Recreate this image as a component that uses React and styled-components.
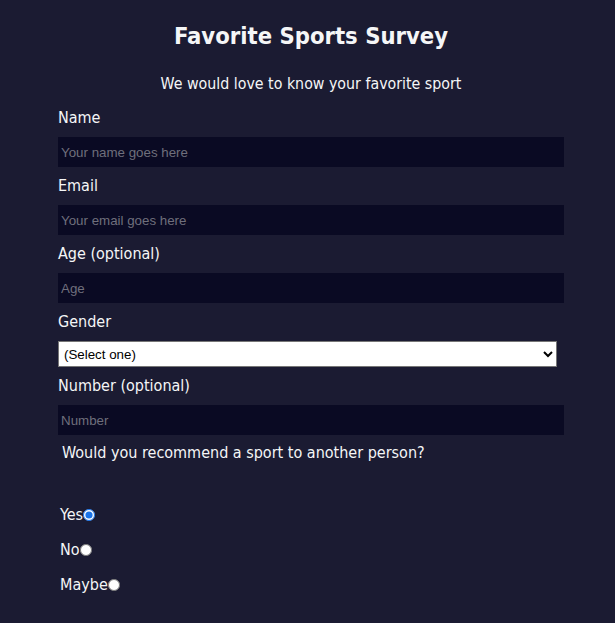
import React from 'react';
import styled, { createGlobalStyle } from 'styled-components';

const Global = createGlobalStyle`
  html, body {
    margin: 0;
    padding: 0;
    background-color: #1b1b32;
    color: #f5f6f7;
    font-family: "DejaVu Sans Condensed", "DejaVu Sans", sans-serif;
    font-size: 16px;
  }
`;

const Page = styled.div`
  width: 506px;
  margin: 0 auto;
  padding: 0 0 20px 7px;
`;

const Title = styled.h1`
  margin: 0;
  padding-top: 20px;
  text-align: center;
  font-size: 23.6px;
  line-height: 32px;
  font-weight: bold;
`;

const Description = styled.p`
  margin: 22px 0 0;
  text-align: center;
  font-size: 15.8px;
  line-height: 19px;
`;

const Label = styled.label`
  display: block;
  margin: ${(p) => (p.$first ? '15px' : '9px')} 0 10px;
  font-size: 16px;
  line-height: 19px;
`;

const Input = styled.input`
  display: block;
  box-sizing: border-box;
  width: 100%;
  height: 30px;
  margin: 0;
  padding: 0 3px;
  border: none;
  outline: none;
  background-color: #0a0a23;
  color: #ffffff;
  font-family: "Liberation Sans", Arial, sans-serif;
  font-size: 13.33px;

  &::placeholder {
    color: #6f6f7c;
  }
`;

const Select = styled.select`
  display: block;
  box-sizing: border-box;
  width: 499px;
  height: 26px;
  margin: 0;
  padding: 0 1px;
  border: 1px solid #767676;
  border-radius: 0;
  background-color: #ffffff;
  color: #000000;
  font-family: "Liberation Sans", Arial, sans-serif;
  font-size: 13.33px;
`;

const Fieldset = styled.fieldset`
  border: none;
  margin: 8px 0 0;
  padding: 0 2px;
`;

const Legend = styled.legend`
  padding: 0 2px;
  font-size: 16px;
  line-height: 19px;
`;

const Options = styled.div`
  display: flex;
  flex-direction: column;
  gap: 16px;
  padding-top: 43px;
`;

const Choice = styled.label`
  display: flex;
  align-items: center;
  font-size: 16px;
  line-height: 19px;
`;

const Radio = styled.input.attrs({ type: 'radio' })`
  width: 12px;
  height: 12px;
  margin: 0;
  accent-color: #1a73e8;
`;

export default function App() {
  return (
    <>
      <Global />
      <Page>
        <Title>Favorite Sports Survey</Title>
        <Description>We would love to know your favorite sport</Description>
        <form>
          <Label $first htmlFor="name">Name</Label>
          <Input id="name" type="text" placeholder="Your name goes here" />
          <Label htmlFor="email">Email</Label>
          <Input id="email" type="email" placeholder="Your email goes here" />
          <Label htmlFor="age">Age (optional)</Label>
          <Input id="age" type="number" placeholder="Age" />
          <Label htmlFor="gender">Gender</Label>
          <Select id="gender" defaultValue="">
            <option value="">(Select one)</option>
            <option value="male">Male</option>
            <option value="female">Female</option>
          </Select>
          <Label htmlFor="number">Number (optional)</Label>
          <Input id="number" type="number" placeholder="Number" />
          <Fieldset>
            <Legend>Would you recommend a sport to another person?</Legend>
            <Options>
              <Choice>Yes<Radio name="recommend" defaultChecked /></Choice>
              <Choice>No<Radio name="recommend" /></Choice>
              <Choice>Maybe<Radio name="recommend" /></Choice>
            </Options>
          </Fieldset>
        </form>
      </Page>
    </>
  );
}
